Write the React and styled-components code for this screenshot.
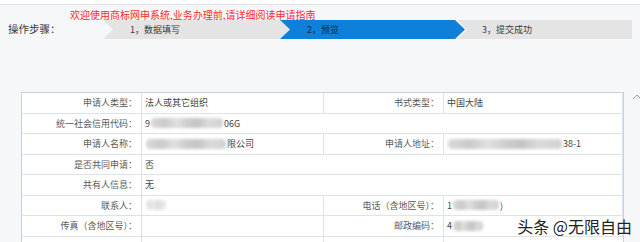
import React from "react";
import styled, { createGlobalStyle } from "styled-components";

const Global = createGlobalStyle`
  html, body { margin: 0; padding: 0; }
  body { background: #f6f7f9; font-family: "Noto Sans CJK SC", "Noto Sans", sans-serif; }
`;

const Page = styled.div`
  position: relative;
  width: 640px;
  height: 242px;
  overflow: hidden;
  background: #f6f7f9;
`;

const TopStrip = styled.div`
  height: 4px;
  background: #ffffff;
  border-bottom: 1px solid #dfe3ea;
`;

const Header = styled.div`
  display: flex;
  align-items: flex-end;
`;

const Title = styled.div`
  width: 70px;
  box-sizing: border-box;
  padding-left: 8px;
  font-size: 10.5px;
  line-height: 20px;
  color: #3a3a3a;
  white-space: nowrap;
`;

const Column = styled.div`
  display: flex;
  flex-direction: column;
`;

const Notice = styled.div`
  height: 15px;
  display: flex;
  align-items: flex-end;
  font-size: 10px;
  line-height: 10px;
  color: #ff2a2a;
  white-space: nowrap;
`;

const Steps = styled.div`
  display: flex;
  margin-left: 33px;
  height: 19px;
`;

const Step = styled.div`
  box-sizing: border-box;
  width: ${(p) => p.$w}px;
  margin-left: ${(p) => p.$ml || 0}px;
  padding-left: ${(p) => p.$pl}px;
  height: 19px;
  line-height: 19px;
  font-size: 9px;
  white-space: nowrap;
  background: ${(p) => (p.$active ? "#0f80da" : "#e4e4e4")};
  color: ${(p) => (p.$active ? "#1a2633" : "#3a3a3a")};
  clip-path: ${(p) =>
    p.$last
      ? "polygon(0 0, 100% 0, 100% 100%, 0 100%, 10px 50%)"
      : "polygon(0 0, calc(100% - 10px) 0, 100% 50%, calc(100% - 10px) 100%, 0 100%, 10px 50%)"};
`;

const Table = styled.div`
  margin: 53px 0 0 21px;
  width: 603px;
  box-sizing: border-box;
  display: grid;
  grid-template-columns: 120px 182px 120px 1fr;
  grid-auto-rows: 20.5px;
  border: 1px solid #c8d1e2;
  border-right-width: 1px;
  background: #ffffff;
`;

const Cell = styled.div`
  box-sizing: border-box;
  display: flex;
  align-items: center;
  justify-content: ${(p) => (p.$label ? "flex-end" : "flex-start")};
  padding: ${(p) => (p.$label ? "0 4px 0 0" : "0 0 0 3px")};
  grid-column: ${(p) => (p.$span ? `span ${p.$span}` : "auto")};
  border-right: 1px solid #dde3ee;
  border-bottom: 1px solid #dde3ee;
  font-size: 9px;
  color: ${(p) => (p.$label ? "#5a5a5a" : "#444444")};
  white-space: nowrap;
  overflow: hidden;
  &:last-child { border-right: none; }
`;

const Blur = styled.span`
  display: inline-block;
  width: ${(p) => p.$w}px;
  height: 10px;
  border-radius: 4px;
  background: linear-gradient(
    90deg,
    #d8d8d8 0%,
    #cacaca 20%,
    #e0e0e0 35%,
    #cdcdcd 50%,
    #c4c4c4 65%,
    #dadada 80%,
    #d2d2d2 100%
  );
  filter: blur(1.4px);
  opacity: ${(p) => p.$light ? 0.6 : 1};
  margin: 0 1px;
`;

const Watermark = styled.div`
  position: absolute;
  right: 8px;
  bottom: 8px;
  font-size: 16px;
  line-height: 16px;
  color: #222;
  text-shadow: 0 0 2px #fff, 0 0 2px #fff;
  white-space: nowrap;
`;

const TopIcon = styled.svg`
  position: absolute;
  left: 632px;
  top: 93px;
`;

const rows = [
  [
    { l: "申请人类型：" },
    { v: "法人或其它组织" },
    { l: "书式类型：" },
    { v: "中国大陆" },
  ],
  [{ l: "统一社会信用代码：" }, { v: ["9", 72, "06G"], span: 3 }],
  [
    { l: "申请人名称：" },
    { v: ["", 80, "限公司"] },
    { l: "申请人地址：" },
    { v: ["", 114, "38-1"] },
  ],
  [{ l: "是否共同申请：" }, { v: "否", span: 3 }],
  [{ l: "共有人信息：" }, { v: "无", span: 3 }],
  [
    { l: "联系人：" },
    { v: ["", 20, "", true] },
    { l: "电话（含地区号）：" },
    { v: ["1", 46, ")"] },
  ],
  [
    { l: "传真（含地区号）：" },
    { v: "" },
    { l: "邮政编码：" },
    { v: ["4", 30, ""] },
  ],
  [{ l: "" }, { v: "" }, { l: "" }, { v: "" }],
];

function Value({ v }) {
  if (Array.isArray(v)) {
    const [a, w, b, light] = v;
    return (
      <>
        {a}
        <Blur $w={w} $light={light} />
        {b}
      </>
    );
  }
  return v;
}

export default function App() {
  return (
    <Page>
      <Global />
      <TopStrip />
      <Header>
        <Title>操作步骤：</Title>
        <Column>
          <Notice>欢迎使用商标网申系统,业务办理前,请详细阅读申请指南</Notice>
          <Steps>
            <Step $w={187} $pl={27}>1，数据填写</Step>
            <Step $w={185} $ml={-10} $pl={27} $active>
              2，预览
            </Step>
            <Step $w={175} $ml={-8} $pl={25} $last>
              3，提交成功
            </Step>
          </Steps>
        </Column>
      </Header>
      <Table>
        {rows.map((r, i) =>
          r.map((c, j) =>
            c.l !== undefined ? (
              <Cell key={`${i}-${j}`} $label>
                {c.l}
              </Cell>
            ) : (
              <Cell key={`${i}-${j}`} $span={c.span}>
                <Value v={c.v} />
              </Cell>
            )
          )
        )}
      </Table>
      <TopIcon width="10" height="7" viewBox="0 0 10 7">
        <path d="M1 6 L5 2 L9 6" fill="none" stroke="#9a9a9a" strokeWidth="1" />
      </TopIcon>
      <Watermark>头条 @无限自由</Watermark>
    </Page>
  );
}
